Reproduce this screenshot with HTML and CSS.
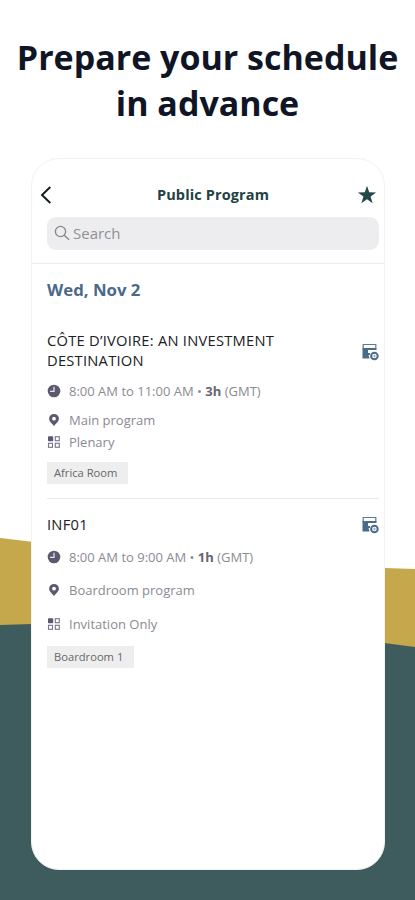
FILE: index.html
```html
<!DOCTYPE html>
<html lang="en">
<head>
<meta charset="utf-8">
<title>Public Program</title>
<link rel="stylesheet" href="styles.css">
</head>
<body>
<svg class="symbols" width="0" height="0" aria-hidden="true">
  <symbol id="clock" viewBox="0 0 14 14"><circle cx="7" cy="7" r="6.3" fill="#5b596f"/><path d="M7 2.8V7.3H3" fill="none" stroke="#e4e4e8" stroke-width="1.3"/></symbol>
  <symbol id="pin" viewBox="0 0 14 14"><path fill="#5b596f" fill-rule="evenodd" d="M7 .9a4.900 4.900 0 0 0-4.900 4.900C2.100 8.600 5.400 10.600 7 13.200 8.600 10.600 11.900 8.600 11.900 5.800A4.900 4.900 0 0 0 7 .9ZM7 3.800a1.900 1.900 0 1 1 0 3.800 1.900 1.900 0 0 1 0-3.800Z"/></symbol>
  <symbol id="grid" viewBox="0 0 14 14"><rect x="1" y="1.200" width="5.200" height="5" rx=".8" fill="#5b596f"/><g fill="none" stroke="#77758a" stroke-width="1.100"><rect x="8.300" y="1.700" width="4" height="4"/><rect x="1.500" y="8.300" width="4" height="4"/><rect x="8.300" y="8.300" width="4" height="4"/></g></symbol>
  <symbol id="add" viewBox="0 0 18 18"><path d="M2.200 1.500h12.600v4.200H2.200Z" fill="#fff" stroke="#5b7c95" stroke-width="1.200"/><path fill="#4b6c89" d="M1.500 5h13.900v2H7v3h2v2H7.500l1 3.500h-7Z"/><circle cx="13.400" cy="13" r="3.300" fill="#fff" stroke="#4b6c89" stroke-width="2"/><path d="M13.400 11.500v3M11.900 13h3" stroke="#7891a5" stroke-width=".7"/></symbol>
</svg>
<main class="page">
  <svg class="backdrop" viewBox="0 0 415 900" aria-hidden="true">
    <path d="M0 538 34 542 384 568 415 569V900H0Z" fill="#c5a84c"/>
    <path d="M0 625 32 624Q210 615 384 643L415 647V900H0Z" fill="#3e5c5e"/>
  </svg>
  <h1 class="headline">Prepare your schedule<br>in advance</h1>
  <section class="phone">
    <header class="bar">
      <svg class="back" viewBox="0 0 12 18"><path d="M10.300 1 2 9l8.300 8" fill="none" stroke="#111a1c" stroke-width="1.900"/></svg>
      <h2 class="title">Public Program</h2>
      <svg class="star" viewBox="0 0 20 20"><path d="m10 .8 2.200 6.500 6.900.1-5.500 4.200 2 6.700-5.600-4-5.600 4 2-6.700L.9 7.400l6.900-.1Z" fill="#24494b"/></svg>
    </header>
    <div class="search">
      <svg class="lens" viewBox="0 0 16 16"><circle cx="6.500" cy="6.500" r="5.100"/><path d="m10.200 10.200 4.900 4.600"/></svg>
      <span>Search</span>
    </div>
    <div class="content">
      <h3 class="date">Wed, Nov 2</h3>
      <article class="event first">
        <div class="event-head"><h4>CÔTE D’IVOIRE: AN INVESTMENT<br>DESTINATION</h4><svg class="add"><use href="#add"/></svg></div>
        <div class="row time"><svg><use href="#clock"/></svg><span>8:00 AM to 11:00 AM • <b>3h</b> (GMT)</span></div>
        <div class="row place"><svg><use href="#pin"/></svg><span>Main program</span></div>
        <div class="row kind"><svg><use href="#grid"/></svg><span>Plenary</span></div>
        <div class="tag tag1">Africa Room</div>
      </article>
      <article class="event second-event">
        <div class="event-head"><h4>INF01</h4><svg class="add"><use href="#add"/></svg></div>
        <div class="row time"><svg><use href="#clock"/></svg><span>8:00 AM to 9:00 AM • <b>1h</b> (GMT)</span></div>
        <div class="row place"><svg><use href="#pin"/></svg><span>Boardroom program</span></div>
        <div class="row kind"><svg><use href="#grid"/></svg><span>Invitation Only</span></div>
        <div class="tag tag2">Boardroom 1</div>
      </article>
    </div>
  </section>
</main>
</body>
</html>
```
FILE: styles.css
```css
* { box-sizing: border-box; }
body { margin: 0; font-family: "Open Sans", sans-serif; background: #fff; }
h1, h2, h3, h4 { margin: 0; }
svg { display: block; flex: none; }
.symbols { position: absolute; }
.page { position: relative; width: 415px; height: 900px; padding-top: 34px; overflow: hidden; isolation: isolate; }
.backdrop { position: absolute; inset: 0; width: 415px; height: 900px; z-index: -1; }
.headline { height: 124px; font-size: 34px; line-height: 46px; font-weight: 700; text-align: center; color: #101526; white-space: nowrap; }
.phone { width: 354px; height: 712px; margin-left: 31px; border: 1px solid #f2f2f0; border-radius: 28px; background: #fff; }
.bar { display: grid; grid-template-columns: 12px 1fr 20px; align-items: center; height: 58px; padding: 14px 7px 0 8px; }
.back { width: 12px; height: 18px; }
.title { padding-left: 17px; font-size: 14.5px; line-height: 20px; font-weight: 700; letter-spacing: .12px; text-align: center; color: #244143; white-space: nowrap; }
.star { width: 20px; height: 20px; }
.search { display: flex; align-items: center; gap: 3px; height: 33px; margin: 0 5px 0 15px; padding: 0 0 2px 7px; border-radius: 9px; background: #ededef; color: #909094; font-size: 15px; }
.lens { width: 16px; height: 16px; fill: none; stroke: #85858a; stroke-width: 1.3; }
.content { margin-top: 13px; padding: 0 5px 0 15px; border-top: 1px solid #ececec; }
.date { height: 67px; padding-top: 14px; font-size: 16.8px; line-height: 24px; color: #4b6989; }
.event-head { display: flex; justify-content: space-between; height: 20px; }
.first .event-head { height: 40px; }
.event h4 { margin-top: -1px; font-size: 14.7px; line-height: 20px; font-weight: 400; letter-spacing: .25px; color: #202024; white-space: nowrap; }
.add { width: 18px; height: 18px; }
.first { height: 168px; border-bottom: 1px solid #e9e9e9; }
.first .add { margin-top: 12px; }
.row { display: flex; align-items: center; gap: 8px; height: 22px; font-size: 13px; line-height: 20px; color: #8b8a93; white-space: nowrap; }
.row svg { width: 14px; height: 14px; }
.row b { color: #666572; font-weight: 700; }
.first .time { margin-top: 9px; }
.first .place { margin-top: 7px; }
.tag { display: flex; align-items: center; height: 22px; padding: 0 0 1px 7px; background: #eee; color: #66666b; font-size: 11.2px; white-space: nowrap; }
.tag1 { width: 81px; margin-top: 9px; }
.second-event { padding-top: 16px; }
.second-event .add { margin-top: 1px; }
.second-event .row { margin-top: 12px; }
.second-event .time { margin-top: 11px; }
.second-event .place { margin-top: 11px; }
.tag2 { width: 87px; margin-top: 11px; }
```
